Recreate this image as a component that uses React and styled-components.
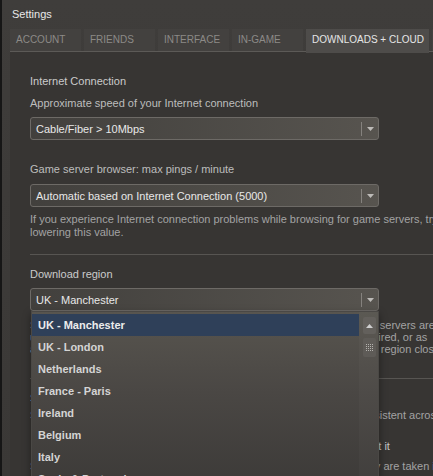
import React from 'react';
import styled, { createGlobalStyle } from 'styled-components';

const GlobalStyle = createGlobalStyle`
  html, body {
    margin: 0;
    height: 100%;
  }
  body {
    background: #161616;
    overflow: hidden;
    font-family: "Liberation Sans", Arial, sans-serif;
  }
`;

const Window = styled.div`
  margin-left: 2px;
  height: 476px;
  background: linear-gradient(180deg, #3f3d3b 0%, #3a3836 100%);
  overflow: hidden;
  display: flex;
  flex-direction: column;
`;

const TitleBar = styled.div`
  height: 29px;
  padding-left: 10px;
  line-height: 28px;
  font-size: 11px;
  color: #e8e8e8;
`;

const TabRow = styled.div`
  display: flex;
  align-items: flex-start;
  gap: 3px;
  height: 22px;
  margin-left: 8px;
  border-bottom: 1px solid #5c5a57;
`;

const Tab = styled.div`
  flex: none;
  position: relative;
  z-index: 1;
  box-sizing: border-box;
  width: ${p => p.$w}px;
  height: ${p => (p.$active ? 24 : 22)}px;
  padding-left: 6px;
  line-height: 22px;
  font-size: 10px;
  white-space: nowrap;
  color: ${p => (p.$active ? '#e6e6e6' : '#8c8a87')};
  background: ${p => (p.$active ? '#4e4c4a' : '#43413f')};
`;

const Panel = styled.div`
  flex: 1;
  min-width: 0;
  margin-left: 8px;
  padding: 22px 0 0 20px;
  background: #373533;
`;

const SectionTitle = styled.div`
  margin-top: ${p => p.$mt || 0}px;
  font-size: 11px;
  line-height: 14px;
  color: #cbcbcb;
`;

const Label = styled.div`
  margin-top: ${p => p.$mt || 0}px;
  font-size: 11px;
  line-height: 14px;
  color: #bdbdbd;
`;

const Help = styled.div`
  margin-top: ${p => p.$mt || 0}px;
  font-size: 11px;
  line-height: ${p => p.$lh || 13}px;
  color: #a3a3a3;
  white-space: nowrap;
`;

const Divider = styled.div`
  margin-top: ${p => p.$mt || 0}px;
  height: 1px;
  background: #575552;
`;

const SelectBox = styled.div`
  position: relative;
  margin-top: ${p => p.$mt || 0}px;
  width: 349px;
  height: 23px;
  box-sizing: border-box;
  display: flex;
  align-items: center;
  border: 1px solid #6d6a66;
  border-radius: 3px;
  background: linear-gradient(90deg, #42403d 0%, #57544f 100%);
`;

const SelectValue = styled.span`
  flex: 1;
  padding-left: 5px;
  font-size: 11px;
  color: #e8e8e8;
  white-space: nowrap;
`;

const SelectArrow = styled.span`
  width: 16px;
  height: 14px;
  border-left: 1px solid #85827e;
  display: flex;
  align-items: center;
  justify-content: center;
`;

const DropList = styled.div`
  position: absolute;
  z-index: 10;
  top: calc(100% + 1px);
  left: 0;
  width: 348px;
  height: 180px;
  box-sizing: border-box;
  display: flex;
  border: 1px solid #4a4845;
  background: linear-gradient(180deg, #58554f 0%, #4a4744 45%, #3c3a38 100%);
  box-shadow: 0 3px 8px rgba(0, 0, 0, 0.4);
`;

const Items = styled.div`
  flex: 1;
  padding-top: 2px;
`;

const Item = styled.div`
  height: 22px;
  line-height: 22px;
  padding-left: 6px;
  font-size: 11px;
  font-weight: bold;
  white-space: nowrap;
  color: ${p => (p.$selected ? '#ececec' : '#d4d4d4')};
  background: ${p => (p.$selected ? '#2f4059' : 'transparent')};
`;

const ScrollTrack = styled.div`
  width: 19px;
  box-sizing: border-box;
  padding: 5px 2px 0 4px;
  background: rgba(255, 255, 255, 0.025);
`;

const ScrollButton = styled.div`
  height: 17px;
  border-radius: 2px;
  background: #63605c;
  display: flex;
  align-items: center;
  justify-content: center;
`;

const ScrollThumb = styled.div`
  margin-top: 4px;
  height: 19px;
  border-radius: 2px;
  background: #5e5b57;
  display: flex;
  align-items: center;
  justify-content: center;
`;

const CheckRow = styled.div`
  margin-top: ${p => p.$mt || 0}px;
  display: flex;
  align-items: center;
  gap: 6px;
  height: 16px;
  font-size: 11px;
  color: #c4c4c4;
  white-space: nowrap;
`;

const CheckBox = styled.span`
  flex: none;
  width: 14px;
  height: 14px;
  margin-left: 1px;
  border: 1px solid #6d6a66;
  border-radius: 2px;
  background: linear-gradient(180deg, #4f4c49, #42403d);
`;

const DownArrow = () => (
  <svg width="7" height="4" viewBox="0 0 7 4">
    <path d="M0 0h7L3.5 4z" fill="#bdbbb8" />
  </svg>
);

const UpArrow = () => (
  <svg width="7" height="4" viewBox="0 0 7 4">
    <path d="M0 4h7L3.5 0z" fill="#d0d0d0" />
  </svg>
);

const Grip = () => (
  <svg width="7" height="7" viewBox="0 0 7 7">
    {[0, 2, 4, 6].map(y =>
      [0, 2, 4, 6].map(x => <rect key={`${x}-${y}`} x={x} y={y} width="1" height="1" fill="#b4b2ae" />)
    )}
  </svg>
);

const Select = ({ value, mt, children }) => (
  <SelectBox $mt={mt}>
    <SelectValue>{value}</SelectValue>
    <SelectArrow>
      <DownArrow />
    </SelectArrow>
    {children}
  </SelectBox>
);

const tabs = [
  { name: 'ACCOUNT', w: 71 },
  { name: 'FRIENDS', w: 71 },
  { name: 'INTERFACE', w: 71 },
  { name: 'IN-GAME', w: 71 },
  { name: 'DOWNLOADS + CLOUD', w: 123, active: true },
  { name: 'VOICE', w: 71 },
];

const regions = [
  'UK - Manchester',
  'UK - London',
  'Netherlands',
  'France - Paris',
  'Ireland',
  'Belgium',
  'Italy',
  'Spain & Portugal',
];

export default function App() {
  return (
    <>
      <GlobalStyle />
      <Window>
        <TitleBar>Settings</TitleBar>
        <TabRow>
          {tabs.map(t => (
            <Tab key={t.name} $w={t.w} $active={t.active}>
              {t.name}
            </Tab>
          ))}
        </TabRow>
        <Panel>
          <SectionTitle>Internet Connection</SectionTitle>
          <Label $mt={8}>Approximate speed of your Internet connection</Label>
          <Select mt={7} value="Cable/Fiber > 10Mbps" />

          <Label $mt={22}>Game server browser: max pings / minute</Label>
          <Select mt={8} value="Automatic based on Internet Connection (5000)" />
          <Help $mt={6}>
            If you experience Internet connection problems while browsing for game servers, try
            <br />
            lowering this value.
          </Help>

          <Divider $mt={15} />

          <SectionTitle $mt={12}>Download region</SectionTitle>
          <Select mt={7} value="UK - Manchester">
            <DropList>
              <Items>
                {regions.map((r, i) => (
                  <Item key={r} $selected={i === 0}>
                    {r}
                  </Item>
                ))}
              </Items>
              <ScrollTrack>
                <ScrollButton>
                  <UpArrow />
                </ScrollButton>
                <ScrollThumb>
                  <Grip />
                </ScrollThumb>
              </ScrollTrack>
            </DropList>
          </Select>
          <Help $mt={8} $lh={12}>
            Steam auto-selects the nearest download server, but if regional content servers are
            <br />
            unavailable or slow, you may choose a different download region if required, or as
            <br />
            a temporary workaround try picking a content server found in a different region close to you.
          </Help>

          <Divider $mt={23} />

          <SectionTitle $mt={12}>Steam Cloud</SectionTitle>
          <Help $mt={4}>
            Steam Cloud lets games store their saves and settings so they are consistent across computers.
          </Help>
          <CheckRow $mt={16}>
            <CheckBox />
            Enable Steam Cloud synchronization for applications which support it
          </CheckRow>
          <Help $mt={6}>
            Screenshots we upload will be kept at the same resolution at which they are taken in game.
          </Help>
        </Panel>
      </Window>
    </>
  );
}
